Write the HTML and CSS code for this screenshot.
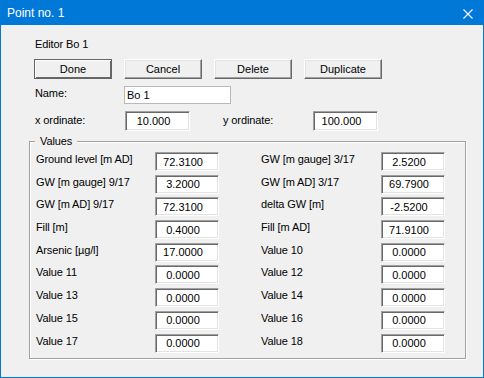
FILE: index.html
```html
<!DOCTYPE html>
<html lang="en">
<head>
<meta charset="UTF-8">
<title>Point no. 1</title>
<link rel="stylesheet" href="styles.css">
</head>
<body>
<div class="win">
    <div class="titlebar">
        <span class="title">Point no. 1</span>
        <svg class="close" width="10" height="10" viewBox="0 0 10 10">
            <path d="M0.5 0.5L9.5 9.5M9.5 0.5L0.5 9.5" stroke="#fff" stroke-width="1.1" fill="none"/>
        </svg>
    </div>
    <div class="client">
        <p class="caption">Editor Bo 1</p>
        <div class="btns">
            <button class="btn def">Done</button>
            <button class="btn">Cancel</button>
            <button class="btn">Delete</button>
            <button class="btn">Duplicate</button>
        </div>
        <div class="row name-row">
            <label class="lbl-name">Name:</label>
            <input class="edit flat" value="Bo 1">
        </div>
        <div class="row ord-row">
            <label class="lbl-ord">x ordinate:</label>
            <input class="edit sunk ord" value="10.000">
            <label class="lbl-ord lbl-y">y ordinate:</label>
            <input class="edit sunk ord" value="100.000">
        </div>
        <fieldset class="group">
            <legend>Values</legend>
            <div class="vals">
                <!-- linke und rechte Spalte abwechselnd -->
                <label>Ground level [m AD]</label><input class="edit sunk" value="72.3100"><span></span>
                <label>GW [m gauge] 3/17</label><input class="edit sunk" value="2.5200">
                <label>GW [m gauge] 9/17</label><input class="edit sunk" value="3.2000"><span></span>
                <label>GW [m AD] 3/17</label><input class="edit sunk" value="69.7900">
                <label>GW [m AD] 9/17</label><input class="edit sunk" value="72.3100"><span></span>
                <label>delta GW [m]</label><input class="edit sunk" value="-2.5200">
                <label>Fill [m]</label><input class="edit sunk" value="0.4000"><span></span>
                <label>Fill [m AD]</label><input class="edit sunk" value="71.9100">
                <label>Arsenic [&micro;g/l]</label><input class="edit sunk" value="17.0000"><span></span>
                <label>Value 10</label><input class="edit sunk" value="0.0000">
                <label>Value 11</label><input class="edit sunk" value="0.0000"><span></span>
                <label>Value 12</label><input class="edit sunk" value="0.0000">
                <label>Value 13</label><input class="edit sunk" value="0.0000"><span></span>
                <label>Value 14</label><input class="edit sunk" value="0.0000">
                <label>Value 15</label><input class="edit sunk" value="0.0000"><span></span>
                <label>Value 16</label><input class="edit sunk" value="0.0000">
                <label>Value 17</label><input class="edit sunk" value="0.0000"><span></span>
                <label>Value 18</label><input class="edit sunk" value="0.0000">
            </div>
        </fieldset>
    </div>
</div>
</body>
</html>
```

FILE: styles.css
```css
html,body,p,fieldset,legend{margin:0;padding:0;}
body{background:#fff;color:#000;font:11px/13px "Liberation Sans",Arial,sans-serif;letter-spacing:-0.1px;}

.win{box-sizing:border-box;width:484px;height:378px;border:1px solid #0078d7;border-top:0;background:#f0f0f0;}
.titlebar{display:flex;justify-content:space-between;align-items:center;height:25px;padding:0 10px 0 6px;background:#0078d7;color:#fff;}
.title{font-size:12px;line-height:24px;padding-top:1px;letter-spacing:0;}
.close{display:block;margin-top:2px;}

.client{padding-left:34px;}
.caption{margin-top:13px;}

.btns{display:flex;gap:12px;margin:8px 0 0 -1px;}
.btn{box-sizing:border-box;width:78px;height:20px;padding:0;background:#f0f0f0;color:#000;font:inherit;
    border:1px solid;border-color:#fff #696969 #696969 #fff;box-shadow:inset -1px -1px #a0a0a0,inset 1px 1px #e3e3e3;}
.btn.def{border-color:#646464;box-shadow:inset 1px 1px #fff,inset -1px -1px #696969;}

.row{display:flex;align-items:flex-start;}
.name-row{margin-top:7px;}
.lbl-name{width:89px;padding-top:1px;}
.ord-row{margin-top:7px;}
.lbl-ord{width:90px;padding-top:3px;}
.lbl-y{margin-left:33px;}

.edit{box-sizing:border-box;height:19px;padding:0 8px 0 0;margin:0;font:inherit;color:#000;background:#fff;outline:none;text-align:center;}
.edit.flat{width:107px;height:18px;padding:0 0 0 2px;text-align:left;border:1px solid #b9b9b9;}
.edit.sunk{width:64px;border:1px solid;border-color:#a0a0a0 #fff #fff #a0a0a0;box-shadow:inset 1px 1px #696969,inset -1px -1px #e3e3e3;}
.edit.ord{width:65px;height:20px;}

.group{width:437px;box-sizing:border-box;margin:4px 0 0 -6px;padding:0 6px 2px;border:1px solid #a0a0a0;box-shadow:inset 1px 1px #fff,1px 1px #fff;}
.group legend{margin-left:-1px;padding:0 5px;background:#f0f0f0;}
.vals{display:grid;grid-template-columns:119px 64px 42px 120px 64px;grid-auto-rows:22.7px;padding-top:4px;}
.vals label{padding-top:1px;white-space:nowrap;}
```
